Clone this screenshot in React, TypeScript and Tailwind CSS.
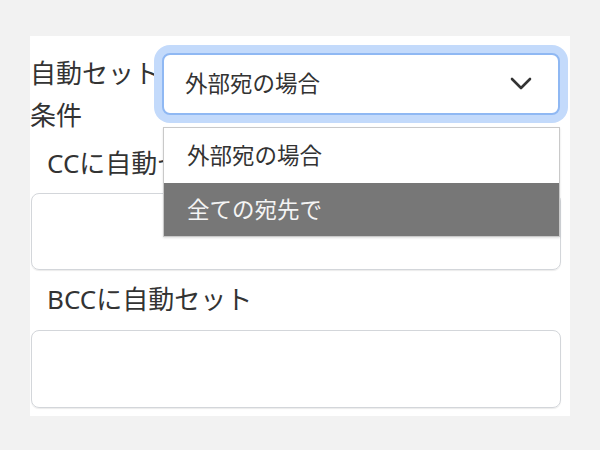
import React from "react";

const font = { fontFamily: '"Noto Sans", "Noto Sans CJK JP", sans-serif' };

export default function App() {
  return (
    <div
      className="w-[600px] h-[450px] bg-[#f2f2f2] pt-[36px] pl-[30px] text-[#333]"
      style={font}
    >
      <div className="relative w-[540px] h-[380px] bg-white">
        <div className="flex items-start pt-[16px]">
          <div className="w-[132px] shrink-0 text-[26px] leading-[42px] whitespace-nowrap">
            <div>自動セット</div>
            <div>条件</div>
          </div>
          <div className="relative mt-[1px] flex h-[62px] w-[398px] items-center justify-between rounded-[8px] border-2 border-[#8fb8f3] bg-white pl-[21px] pr-[26px] shadow-[0_0_0_8px_#c3dafb]">
            <span className="text-[22.5px] leading-none">外部宛の場合</span>
            <svg width="22" height="14" viewBox="0 0 22 14">
              <polyline
                points="2,2 11,11 20,2"
                fill="none"
                stroke="#333"
                strokeWidth="2.6"
                strokeLinecap="round"
                strokeLinejoin="round"
              />
            </svg>
          </div>
        </div>
        <div className="mt-[9px] pl-[17px] text-[26px] leading-[36px]">CCに自動セット</div>
        <div className="mt-[12px] h-[77px] w-[530px] ml-[1px] rounded-[8px] border border-[#d3d6da] shadow-[0_1px_1px_rgba(0,0,0,0.08)]" />
        <div className="mt-[11px] pl-[17px] text-[26px] leading-[36px]">BCCに自動セット</div>
        <div className="mt-[13px] h-[78px] w-[530px] ml-[1px] rounded-[8px] border border-[#d3d6da] shadow-[0_1px_1px_rgba(0,0,0,0.08)]" />

        <div className="absolute left-[133px] top-[91px] w-[397px] border border-[#c9c9c9] bg-white shadow-[0_1px_2px_rgba(0,0,0,0.12)]">
          <div className="flex h-[55px] items-center pl-[23px] text-[22.5px]">外部宛の場合</div>
          <div className="flex h-[53px] items-center bg-[#777777] pl-[23px] text-[22.5px] text-[#f4f4f4]">
            全ての宛先で
          </div>
        </div>
      </div>
    </div>
  );
}
